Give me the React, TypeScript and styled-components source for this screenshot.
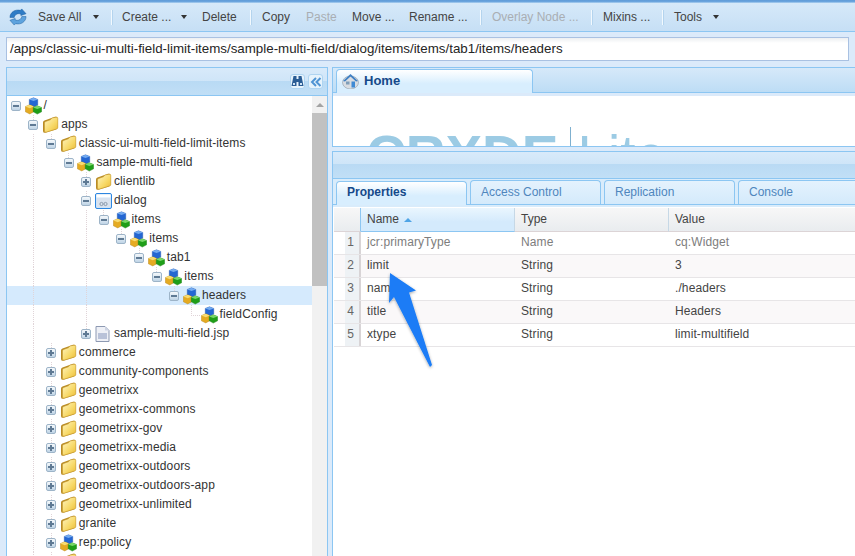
import { createGlobalStyle, styled } from 'styled-components';

const GlobalStyle = createGlobalStyle`
  html, body {
    margin: 0;
    padding: 0;
    background: #dbeafa;
  }
  * {
    box-sizing: border-box;
  }
`;

type IconKind = 'cubes' | 'folder' | 'dialog' | 'file';

interface TreeNode {
  label: string;
  depth: number;
  icon: IconKind;
  toggle: 'minus' | 'plus' | 'leaf';
  lines?: number[];
  selected?: boolean;
}

const TREE: TreeNode[] = [
  { label: '/', depth: 0, icon: 'cubes', toggle: 'minus' },
  { label: 'apps', depth: 1, icon: 'folder', toggle: 'minus' },
  { label: 'classic-ui-multi-field-limit-items', depth: 2, icon: 'folder', toggle: 'minus', lines: [1] },
  { label: 'sample-multi-field', depth: 3, icon: 'cubes', toggle: 'minus', lines: [1] },
  { label: 'clientlib', depth: 4, icon: 'folder', toggle: 'plus', lines: [1] },
  { label: 'dialog', depth: 4, icon: 'dialog', toggle: 'minus', lines: [1] },
  { label: 'items', depth: 5, icon: 'cubes', toggle: 'minus', lines: [1, 4] },
  { label: 'items', depth: 6, icon: 'cubes', toggle: 'minus', lines: [1, 4] },
  { label: 'tab1', depth: 7, icon: 'cubes', toggle: 'minus', lines: [1, 4] },
  { label: 'items', depth: 8, icon: 'cubes', toggle: 'minus', lines: [1, 4] },
  { label: 'headers', depth: 9, icon: 'cubes', toggle: 'minus', lines: [1, 4], selected: true },
  { label: 'fieldConfig', depth: 10, icon: 'cubes', toggle: 'leaf', lines: [1, 4] },
  { label: 'sample-multi-field.jsp', depth: 4, icon: 'file', toggle: 'plus', lines: [1] },
  { label: 'commerce', depth: 2, icon: 'folder', toggle: 'plus', lines: [1] },
  { label: 'community-components', depth: 2, icon: 'folder', toggle: 'plus', lines: [1] },
  { label: 'geometrixx', depth: 2, icon: 'folder', toggle: 'plus', lines: [1] },
  { label: 'geometrixx-commons', depth: 2, icon: 'folder', toggle: 'plus', lines: [1] },
  { label: 'geometrixx-gov', depth: 2, icon: 'folder', toggle: 'plus', lines: [1] },
  { label: 'geometrixx-media', depth: 2, icon: 'folder', toggle: 'plus', lines: [1] },
  { label: 'geometrixx-outdoors', depth: 2, icon: 'folder', toggle: 'plus', lines: [1] },
  { label: 'geometrixx-outdoors-app', depth: 2, icon: 'folder', toggle: 'plus', lines: [1] },
  { label: 'geometrixx-unlimited', depth: 2, icon: 'folder', toggle: 'plus', lines: [1] },
  { label: 'granite', depth: 2, icon: 'folder', toggle: 'plus', lines: [1] },
  { label: 'rep:policy', depth: 2, icon: 'cubes', toggle: 'plus', lines: [1] },
  { label: '', depth: 2, icon: 'folder', toggle: 'plus', lines: [1] },
];

const PROPERTIES = [
  { name: 'jcr:primaryType', type: 'Name', value: 'cq:Widget', muted: true },
  { name: 'limit', type: 'String', value: '3' },
  { name: 'name', type: 'String', value: './headers' },
  { name: 'title', type: 'String', value: 'Headers' },
  { name: 'xtype', type: 'String', value: 'limit-multifield' },
];

const PROPERTY_TABS = ['Properties', 'Access Control', 'Replication', 'Console'];

const Logo = () => (
  <svg width="19" height="18" viewBox="0 0 19 18">
    <path d="M1 9.500C1 4 6.500 .5 12 2l1.500-1.500L18 5.500l-5.500 2V6C9.500 4.500 6 6.500 5.500 9.500Z" fill="#2f7cc6" stroke="#1c5c9c" strokeWidth="0.5" />
    <path d="M18 8.500c0 5.500-5.500 9-11 7.500L5.500 17.500 1 12.500l5.500-2V12c3 1.500 6.500-.5 7-3.500Z" fill="#5ea3de" stroke="#1c5c9c" strokeWidth="0.5" />
  </svg>
);

const Caret = () => (
  <svg width="6" height="4" viewBox="0 0 6 4">
    <path d="M0 0h6L3 4Z" fill="#333" />
  </svg>
);

const Binoculars = () => (
  <svg width="13" height="13" viewBox="0 0 13 13">
    <path d="M2.500 1H5.500V4H7.500V1H10.500L12.500 11H7.500V7H5.500V11H.5Z" fill="#2a5d95" />
    <path d="M2 8h2v2H2zM9 8h2v2H9z" fill="#cfe3f5" />
  </svg>
);

const DoubleChevron = () => (
  <svg width="12" height="12" viewBox="0 0 12 12" fill="none" stroke="#4f94d4" strokeWidth="2">
    <path d="M6 2 2 6l4 4M10.500 2l-4 4 4 4" />
  </svg>
);

const HomeIcon = () => (
  <svg width="17" height="16" viewBox="0 0 17 16">
    <ellipse cx="8.500" cy="9.500" rx="8" ry="6.500" fill="#d9dde2" stroke="#8b98a6" strokeWidth="0.6" />
    <path d="M1 8 8.500 1 16 8 14 8.500 8.500 3.500 3 8.500Z" fill="#3f80c4" />
    <rect x="9.500" y="8.500" width="3.500" height="6" fill="#3f8ad4" />
    <rect x="4" y="8.500" width="3.500" height="3" fill="#7f9db8" />
  </svg>
);

const Cubes = () => (
  <svg width="18" height="18" viewBox="0 0 18 18">
    <path d="M4.500 2 9 .3 13.500 2v6L9 10 4.500 8Z" fill="#2467d2" stroke="#1b4ea6" strokeWidth="0.4" />
    <path d="M4.500 2 9 3.800 13.500 2 9 .3Z" fill="#74abf0" />
    <path d="M.4 9.500 5 7.800l4.300 1.700v5.700L5 17.400.4 15.200Z" fill="#e5ab22" stroke="#a87a14" strokeWidth="0.4" />
    <path d="M.4 9.500 5 11.300l4.300-1.800L5 7.800Z" fill="#f8dc72" />
    <path d="M8.700 10.500 13 8.800l4.600 1.700v4.700L13 17.600l-4.300-2.400Z" fill="#1f9e18" stroke="#16780f" strokeWidth="0.4" />
    <path d="M8.700 10.500 13 12.300l4.600-1.800L13 8.800Z" fill="#7ad768" />
  </svg>
);

const Folder = () => (
  <svg width="17" height="17" viewBox="0 0 17 17">
    <defs>
      <linearGradient id="folderFill" x1="0" y1="0" x2="1" y2="1">
        <stop offset="0" stopColor="#fff6c4" />
        <stop offset="0.6" stopColor="#f7d865" />
        <stop offset="1" stopColor="#e9b937" />
      </linearGradient>
    </defs>
    <path d="M1 6.500Q1 5 2.500 4.500L13 .8Q15.500.2 15.500 2V11.500Q15.500 13 14 13.500L3.500 16.800Q1 17.200 1 15Z" fill="#b98c25" />
    <path d="M2.500 7Q2.500 5.800 3.800 5.400L8.500 3.800Q9 2.200 10.500 1.900L14 1.200Q15.800 1 15.800 2.500V11.500Q15.800 12.700 14.500 13L4 16.200Q2.500 16.500 2.500 15Z" fill="url(#folderFill)" stroke="#c2952a" strokeWidth="0.5" />
  </svg>
);

const DialogIcon = () => (
  <svg width="17" height="16" viewBox="0 0 17 16">
    <rect x="0.500" y="0.500" width="16" height="15" rx="1.500" fill="#cfe3f7" stroke="#2d86e0" />
    <rect x="1.500" y="1.500" width="14" height="3" fill="#fff" />
    <path d="M2 5h13v9H2Z" fill="#d9e2ee" />
    <circle cx="6.500" cy="11" r="1.600" fill="none" stroke="#8a99ab" />
    <circle cx="10.500" cy="11" r="1.600" fill="none" stroke="#8a99ab" />
  </svg>
);

const FileIcon = () => (
  <svg width="15" height="16" viewBox="0 0 15 16">
    <path d="M1 .500h9l4 4V15.500H1Z" fill="#eef0f6" stroke="#8d99b2" />
    <path d="M3 7h9v6H3Z" fill="#b9c2d8" />
    <path d="M10 .500v4h4Z" fill="#cdd4e3" />
  </svg>
);

const NODE_ICONS = {
  cubes: Cubes,
  folder: Folder,
  dialog: DialogIcon,
  file: FileIcon,
};

const Arrow = () => (
  <ArrowOverlay width="60" height="112" viewBox="0 0 60 112">
    <defs>
      <filter id="arrowShadow" x="-30%" y="-30%" width="160%" height="160%">
        <feDropShadow dx="0" dy="1" stdDeviation="1.500" floodColor="#000" floodOpacity="0.35" />
      </filter>
    </defs>
    <path d="M9 2 35 19.500 28 21.500 51 94 49 96 13 26 8 32Z" fill="#1a7cf6" filter="url(#arrowShadow)" />
  </ArrowOverlay>
);

export default function App() {
  return (
    <>
      <GlobalStyle />
      <Page>
        <TopLine />
        <Toolbar>
          <LogoSlot>
            <Logo />
          </LogoSlot>
          <ToolButton $w={45} $ml={11}>Save All</ToolButton>
          <CaretSlot $ml={10}><Caret /></CaretSlot>
          <Separator $ml={12} />
          <ToolButton $w={49} $ml={10}>Create ...</ToolButton>
          <CaretSlot $ml={10}><Caret /></CaretSlot>
          <ToolButton $w={36} $ml={15}>Delete</ToolButton>
          <Separator $ml={12} />
          <ToolButton $w={29} $ml={11}>Copy</ToolButton>
          <ToolButton $w={31} $ml={15} $disabled>Paste</ToolButton>
          <ToolButton $w={42} $ml={15}>Move ...</ToolButton>
          <ToolButton $w={59} $ml={15}>Rename ...</ToolButton>
          <Separator $ml={12} />
          <ToolButton $w={87} $ml={11} $disabled>Overlay Node ...</ToolButton>
          <Separator $ml={12} />
          <ToolButton $w={47} $ml={11}>Mixins ...</ToolButton>
          <Separator $ml={12} />
          <ToolButton $w={28} $ml={11}>Tools</ToolButton>
          <CaretSlot $ml={11}><Caret /></CaretSlot>
        </Toolbar>
        <PathBar>
          <PathInput>/apps/classic-ui-multi-field-limit-items/sample-multi-field/dialog/items/items/tab1/items/headers</PathInput>
        </PathBar>
        <Main>
          <TreePanel>
            <TreeHeader>
              <HeaderButton><Binoculars /></HeaderButton>
              <HeaderButton><DoubleChevron /></HeaderButton>
            </TreeHeader>
            <TreeBody>
              <TreeList>
                {TREE.map((node, index) => {
                  const Icon = NODE_ICONS[node.icon];
                  return (
                    <TreeRow key={index} $selected={node.selected}>
                      {Array.from({ length: node.depth }, (_, col) => (
                        <Guide key={col} $line={node.lines?.includes(col)} />
                      ))}
                      {node.toggle === 'leaf' ? (
                        <LeafConnector />
                      ) : (
                        <ToggleCell $stub={node.depth > 0}>
                          <Toggle $plus={node.toggle === 'plus'} />
                        </ToggleCell>
                      )}
                      <IconCell><Icon /></IconCell>
                      <NodeLabel>{node.label}</NodeLabel>
                    </TreeRow>
                  );
                })}
              </TreeList>
              <Scrollbar>
                <ScrollUp />
                <ScrollThumb />
              </Scrollbar>
            </TreeBody>
          </TreePanel>
          <RightColumn>
            <HomePanel>
              <HomeTabStrip>
                <HomeTab>
                  <HomeIcon />
                  <HomeTabLabel>Home</HomeTabLabel>
                </HomeTab>
              </HomeTabStrip>
              <HomeContent>
                <BrandText>CRXDE</BrandText>
                <BrandRule />
                <BrandLite>Lite</BrandLite>
              </HomeContent>
            </HomePanel>
            <PropertiesPanel>
              <PropertiesHeader />
              <PropertyTabs>
                {PROPERTY_TABS.map((tab, index) => (
                  <PropertyTab key={tab} $active={index === 0}>{tab}</PropertyTab>
                ))}
              </PropertyTabs>
              <Grid>
                <GridRow $header>
                  <NumberHead />
                  <HeadCell $sorted>
                    Name <SortMark />
                  </HeadCell>
                  <HeadCell>Type</HeadCell>
                  <HeadCell $flex>Value</HeadCell>
                </GridRow>
                {PROPERTIES.map((prop, index) => (
                  <GridRow key={prop.name} $alt={index % 2 === 1}>
                    <NumberCell>{index + 1}</NumberCell>
                    <Cell $muted={prop.muted}>{prop.name}</Cell>
                    <Cell $muted={prop.muted}>{prop.type}</Cell>
                    <Cell $muted={prop.muted} $flex>{prop.value}</Cell>
                  </GridRow>
                ))}
              </Grid>
              <Arrow />
            </PropertiesPanel>
          </RightColumn>
        </Main>
      </Page>
    </>
  );
}

const Page = styled.div`
  position: relative;
  width: 855px;
  height: 556px;
  overflow: hidden;
  display: flex;
  flex-direction: column;
  background: #dbeafa;
  font-family: 'Liberation Sans', Arial, sans-serif;
  font-size: 12px;
`;

const TopLine = styled.div`
  height: 3px;
  flex: none;
  background: linear-gradient(#5f9bd8, #6ea7df 66%, #c4dff5);
`;

const Toolbar = styled.div`
  height: 29px;
  flex: none;
  display: flex;
  align-items: center;
  background: linear-gradient(#d6e9f9, #c6dff5);
  border-bottom: 1px solid #8cc6f2;
  color: #4a4a4a;
`;

const LogoSlot = styled.div`
  width: 27px;
  padding-left: 9px;
  display: flex;
  flex: none;
`;

const ToolButton = styled.div<{ $w: number; $ml: number; $disabled?: boolean }>`
  width: ${(p) => p.$w}px;
  margin-left: ${(p) => p.$ml}px;
  flex: none;
  white-space: nowrap;
  color: ${(p) => (p.$disabled ? '#a9aeb3' : '#444')};
`;

const CaretSlot = styled.div<{ $ml: number }>`
  margin-left: ${(p) => p.$ml}px;
  display: flex;
  flex: none;
`;

const Separator = styled.div<{ $ml: number }>`
  width: 1px;
  height: 15px;
  margin-left: ${(p) => p.$ml}px;
  flex: none;
  background: #f2f9fe;
  box-shadow: 1px 0 0 #b4d4ee;
`;

const PathBar = styled.div`
  height: 35px;
  flex: none;
  padding: 5px 6px 6px;
`;

const PathInput = styled.div`
  height: 24px;
  border: 1px solid #a9c1e2;
  background: linear-gradient(#eceff1, #fff 5px);
  color: #252525;
  font-size: 13.330px;
  line-height: 22px;
  padding-left: 3px;
  white-space: nowrap;
  overflow: hidden;
`;

const Main = styled.div`
  flex: 1;
  min-height: 0;
  display: flex;
  padding-left: 6px;
  gap: 4px;
`;

const TreePanel = styled.div`
  width: 322px;
  flex: none;
  display: flex;
  flex-direction: column;
  border-left: 1px solid #8cc6f2;
  border-right: 1px solid #8cc6f2;
  border-top: 1px solid #8cc6f2;
  background: #fff;
`;

const TreeHeader = styled.div`
  height: 28px;
  flex: none;
  display: flex;
  justify-content: flex-end;
  align-items: flex-start;
  gap: 3px;
  padding: 6px 4px 0 0;
  border-bottom: 1px solid #8cc6f2;
  background: linear-gradient(#d8eafa 0, #cfe5f8 50%, #b9daf4 50%, #c1dff6 100%);
`;

const HeaderButton = styled.div`
  width: 15px;
  height: 15px;
  display: flex;
  align-items: center;
  justify-content: center;
  border: 1px solid #aed4f1;
  border-radius: 3px;
  background: #e6f3fc;
`;

const TreeBody = styled.div`
  flex: 1;
  min-height: 0;
  display: flex;
  overflow: hidden;
`;

const TreeList = styled.div`
  flex: 1;
  min-width: 0;
`;

const TreeRow = styled.div<{ $selected?: boolean }>`
  height: 19px;
  display: flex;
  align-items: stretch;
  background: ${(p) => (p.$selected ? '#d5eafd' : 'transparent')};
`;

const Guide = styled.div<{ $line?: boolean }>`
  width: 17.600px;
  flex: none;
  background: ${(p) =>
    p.$line
      ? 'repeating-linear-gradient(#e0d4d8 0 1px, transparent 1px 2px) 8.500px 0 / 1px 100% no-repeat'
      : 'none'};
`;

const ToggleCell = styled.div<{ $stub?: boolean }>`
  width: 17.600px;
  flex: none;
  display: flex;
  align-items: center;
  justify-content: center;
  background: ${(p) =>
    p.$stub
      ? 'repeating-linear-gradient(#e0d4d8 0 1px, transparent 1px 2px) 8.500px 0 / 1px 6px no-repeat'
      : 'none'};
`;

const Toggle = styled.div<{ $plus?: boolean }>`
  position: relative;
  width: 10px;
  height: 10px;
  margin-top: 1px;
  border: 1px solid #9db4c8;
  border-radius: 2px;
  background: linear-gradient(#f4f8fb, #bfd4e6);

  &::before {
    content: '';
    position: absolute;
    left: 1px;
    top: 3px;
    width: 6px;
    height: 2px;
    background: #5f7a94;
  }

  &::after {
    content: '';
    display: ${(p) => (p.$plus ? 'block' : 'none')};
    position: absolute;
    left: 3px;
    top: 1px;
    width: 2px;
    height: 6px;
    background: #5f7a94;
  }
`;

const LeafConnector = styled.div`
  width: 17.600px;
  flex: none;
  background:
    repeating-linear-gradient(#e0d4d8 0 1px, transparent 1px 2px) 8.500px 0 / 1px 10px no-repeat,
    repeating-linear-gradient(90deg, #e0d4d8 0 1px, transparent 1px 2px) 8.500px 10px / 9px 1px no-repeat;
`;

const IconCell = styled.div`
  width: 17px;
  flex: none;
  display: flex;
  align-items: center;
  justify-content: flex-start;
`;

const NodeLabel = styled.div`
  margin-left: 2px;
  font-size: 12px;
  letter-spacing: 0.12px;
  line-height: 18px;
  color: #333;
  white-space: nowrap;
`;

const Scrollbar = styled.div`
  width: 15px;
  flex: none;
  background: #f1f1f1;
  display: flex;
  flex-direction: column;
  align-items: center;
`;

const ScrollUp = styled.div`
  width: 0;
  height: 0;
  margin-top: 7px;
  border-left: 4px solid transparent;
  border-right: 4px solid transparent;
  border-bottom: 4px solid #a3a3a3;
`;

const ScrollThumb = styled.div`
  width: 15px;
  height: 173px;
  margin-top: 6px;
  background: #c1c1c1;
`;

const RightColumn = styled.div`
  flex: 1;
  min-width: 0;
  display: flex;
  flex-direction: column;
  gap: 4px;
`;

const HomePanel = styled.div`
  height: 80px;
  flex: none;
  display: flex;
  flex-direction: column;
  border: 1px solid #8cc6f2;
  border-right: none;
`;

const HomeTabStrip = styled.div`
  height: 28px;
  flex: none;
  display: flex;
  align-items: flex-end;
  padding: 1px 0 0 3px;
  background: linear-gradient(#d6e9f9, #bcdcf5);
  border-bottom: 3px solid #dbeafa;
  box-shadow: inset 0 -1px 0 #8cc6f2, 0 1px 0 #8cc6f2;
`;

const HomeTab = styled.div`
  width: 197px;
  height: 24px;
  display: flex;
  align-items: center;
  gap: 5px;
  padding: 0 0 2px 5px;
  border: 1px solid #8cc6f2;
  border-bottom: none;
  border-radius: 4px 4px 0 0;
  background: linear-gradient(#fff, #d8eefe 60%);
`;

const HomeTabLabel = styled.span`
  font-weight: bold;
  font-size: 13px;
  color: #15498a;
`;

const HomeContent = styled.div`
  flex: 1;
  min-height: 0;
  overflow: hidden;
  background: #fff;
  display: flex;
  align-items: flex-start;
  padding: 39px 0 0 33px;
  color: #9ccbe4;
`;

const BrandText = styled.div`
  font-size: 55px;
  font-weight: bold;
  line-height: 40px;
`;

const BrandRule = styled.div`
  width: 1px;
  height: 40px;
  margin: -8px 7px 0 11px;
  background: #7fb0cf;
`;

const BrandLite = styled.div`
  font-size: 55px;
  line-height: 40px;
`;

const PropertiesPanel = styled.div`
  position: relative;
  flex: 1;
  min-height: 0;
  display: flex;
  flex-direction: column;
  border-left: 1px solid #8cc6f2;
  border-top: 1px solid #8cc6f2;
  background: #fff;
`;

const PropertiesHeader = styled.div`
  height: 27px;
  flex: none;
  border-bottom: 1px solid #8cc6f2;
  background: linear-gradient(#d8eafa 0, #cee5f8 48%, #b9daf4 48%, #c1dff6 100%);
`;

const PropertyTabs = styled.div`
  height: 26px;
  flex: none;
  display: flex;
  align-items: flex-end;
  gap: 3px;
  padding-left: 3px;
  background: #d9ecfb;
  border-bottom: 1px solid #8cc6f2;
  box-shadow: 0 2px 0 #d9ecfb;
`;

const PropertyTab = styled.div<{ $active?: boolean }>`
  width: 131px;
  height: 24px;
  flex: none;
  padding-left: 10px;
  line-height: ${(p) => (p.$active ? 21 : 22)}px;
  border: 1px solid #8cc6f2;
  border-bottom: none;
  border-radius: 4px 4px 0 0;
  font-weight: ${(p) => (p.$active ? 'bold' : 'normal')};
  color: ${(p) => (p.$active ? '#15498a' : '#4f86bd')};
  background: ${(p) =>
    p.$active
      ? 'linear-gradient(#fff, #d8eefe 60%)'
      : 'linear-gradient(#e4f2fd, #d4eafb)'};
  margin-bottom: ${(p) => (p.$active ? '-1px' : '0')};
`;

const Grid = styled.div`
  margin-top: 3px;
  padding-left: 1px;
  display: flex;
  flex-direction: column;
`;

const GridRow = styled.div<{ $header?: boolean; $alt?: boolean }>`
  height: ${(p) => (p.$header ? 24 : 23)}px;
  flex: none;
  display: flex;
  border-bottom: ${(p) => (p.$header ? 'none' : '1px solid #e7e5e7')};
  background: ${(p) => (p.$alt ? '#faf8f9' : '#fff')};
`;

const NumberHead = styled.div`
  width: 27px;
  flex: none;
  background: linear-gradient(#f7f7f7, #e9ecef);
  border-right: 1px solid #8cc6f2;
  border-bottom: 1px solid #dcd4d6;
`;

const HeadCell = styled.div<{ $sorted?: boolean; $flex?: boolean }>`
  width: ${(p) => (p.$flex ? 'auto' : '154px')};
  flex: ${(p) => (p.$flex ? 1 : 'none')};
  padding-left: 6px;
  line-height: 23px;
  color: #444;
  border-right: ${(p) => (p.$flex ? 'none' : '1px solid')};
  border-right-color: #c6d8e6;
  border-bottom: 1px solid ${(p) => (p.$sorted ? '#8cc6f2' : '#dcd4d6')};
  background: ${(p) =>
    p.$sorted
      ? 'linear-gradient(#eaf6fe, #d4eafc 60%)'
      : 'linear-gradient(#f7f7f7, #e9ecef)'};
`;

const SortMark = styled.span`
  display: inline-block;
  width: 0;
  height: 0;
  margin-left: 2px;
  vertical-align: 1px;
  border-left: 4px solid transparent;
  border-right: 4px solid transparent;
  border-bottom: 4px solid #4ea4e6;
`;

const NumberCell = styled.div`
  width: 27px;
  flex: none;
  padding-right: 5px;
  text-align: right;
  line-height: 21px;
  color: #666;
  border-right: 2px solid #d8d4d6;
  background: linear-gradient(90deg, transparent 11px, #eef2f5 11px);
`;

const Cell = styled.div<{ $muted?: boolean; $flex?: boolean }>`
  width: ${(p) => (p.$flex ? 'auto' : '154px')};
  flex: ${(p) => (p.$flex ? 1 : 'none')};
  padding-left: 6px;
  letter-spacing: 0.1px;
  line-height: 21px;
  color: ${(p) => (p.$muted ? '#7d7d7d' : '#444')};
  white-space: nowrap;
`;

const ArrowOverlay = styled.svg`
  position: absolute;
  left: 48px;
  top: 119px;
  overflow: visible;
`;
